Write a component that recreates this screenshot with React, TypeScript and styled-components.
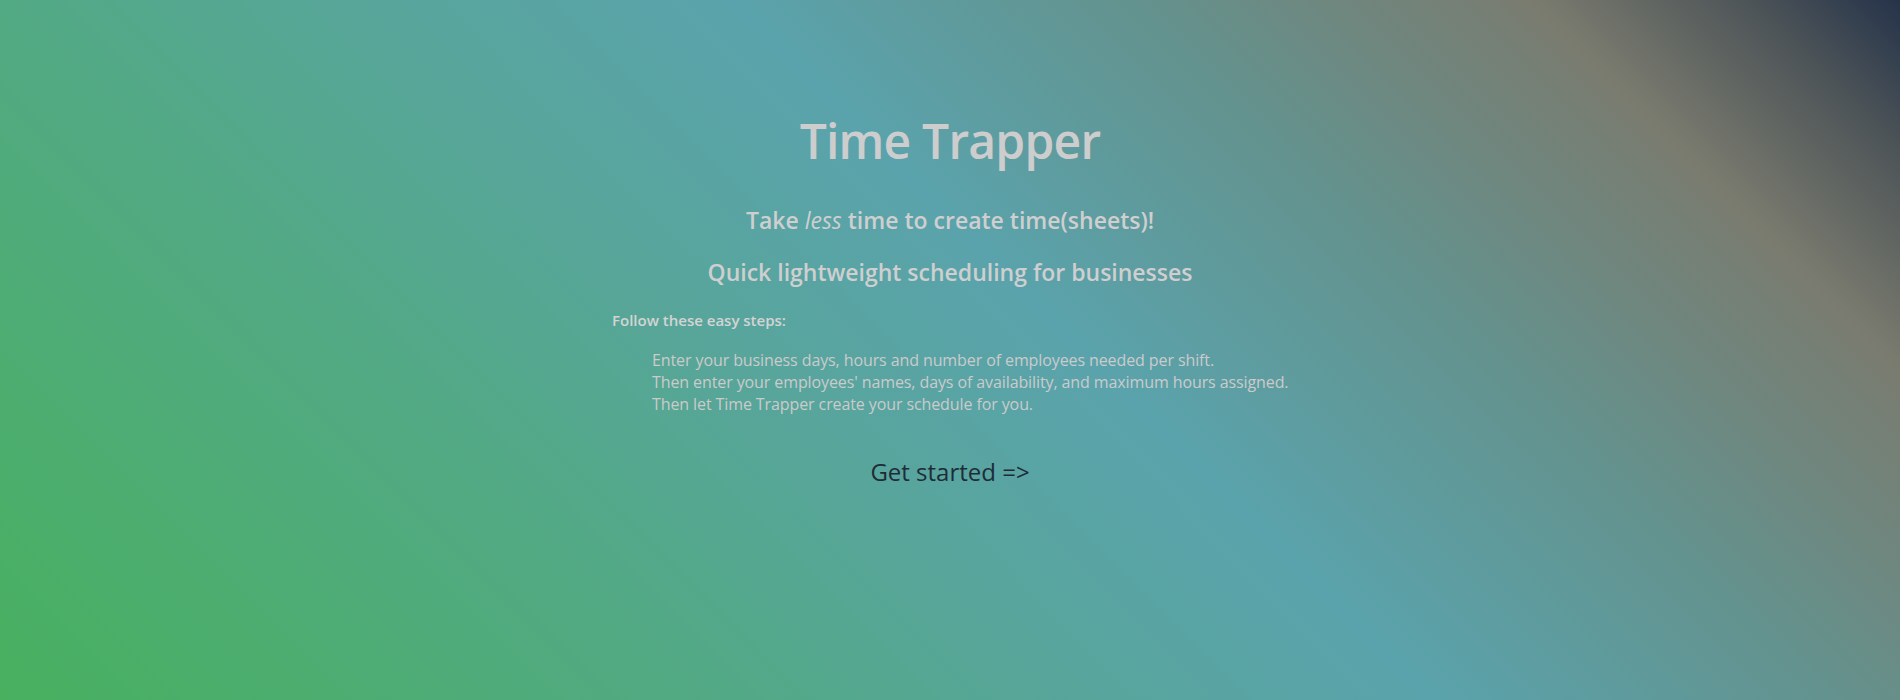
import React from "react";
import styled, { createGlobalStyle } from "styled-components";

const GlobalStyle = createGlobalStyle`
  html, body {
    margin: 0;
    padding: 0;
  }
  body {
    font-family: "Open Sans", "Liberation Sans", Arial, sans-serif;
  }
`;

const Page = styled.main`
  min-height: 100vh;
  box-sizing: border-box;
  padding-top: 117px;
  background: linear-gradient(
    45deg,
    #48b05f 0%,
    #52a985 28%,
    #58a59c 42%,
    #5aa3ac 55%,
    #63938f 70%,
    #7a7b6f 86%,
    #4e5558 94%,
    #25334a 100%
  );
  display: flex;
  flex-direction: column;
  align-items: center;
  color: #cccccc;
`;

const Title = styled.h1`
  margin: 0;
  font-size: 48px;
  line-height: 1;
  font-weight: 600;
  letter-spacing: -0.8px;
  color: #cdcdcd;
`;

const Tagline = styled.h3<{ $gap: number }>`
  margin: ${(p) => p.$gap}px 0 0;
  font-size: 23px;
  line-height: 1;
  font-weight: 600;
  color: #cfcfcf;

  em {
    font-style: italic;
    font-weight: 400;
  }
`;

const Steps = styled.section`
  width: 676px;
  margin-top: 29px;
`;

const StepsHeading = styled.h4`
  margin: 0;
  font-size: 15px;
  line-height: 1;
  font-weight: 600;
  color: #d4d4d4;
`;

const StepList = styled.ul`
  list-style: none;
  margin: 21px 0 0;
  padding: 0 0 0 40px;
`;

const Step = styled.li`
  font-size: 16px;
  line-height: 22px;
  letter-spacing: -0.1px;
  white-space: nowrap;
  color: #cbcbcb;
`;

const StartLink = styled.a`
  margin-top: 45px;
  font-size: 24px;
  line-height: 1;
  color: #1f2c38;
  text-decoration: none;
  cursor: pointer;
`;

export default function App() {
  return (
    <>
      <GlobalStyle />
      <Page>
        <Title>Time Trapper</Title>
        <Tagline $gap={44}>
          Take <em>less</em> time to create time(sheets)!
        </Tagline>
        <Tagline $gap={29}>Quick lightweight scheduling for businesses</Tagline>
        <Steps>
          <StepsHeading>Follow these easy steps:</StepsHeading>
          <StepList>
            <Step>Enter your business days, hours and number of employees needed per shift.</Step>
            <Step>Then enter your employees' names, days of availability, and maximum hours assigned.</Step>
            <Step>Then let Time Trapper create your schedule for you.</Step>
          </StepList>
        </Steps>
        <StartLink href="#">Get started =&gt;</StartLink>
      </Page>
    </>
  );
}
